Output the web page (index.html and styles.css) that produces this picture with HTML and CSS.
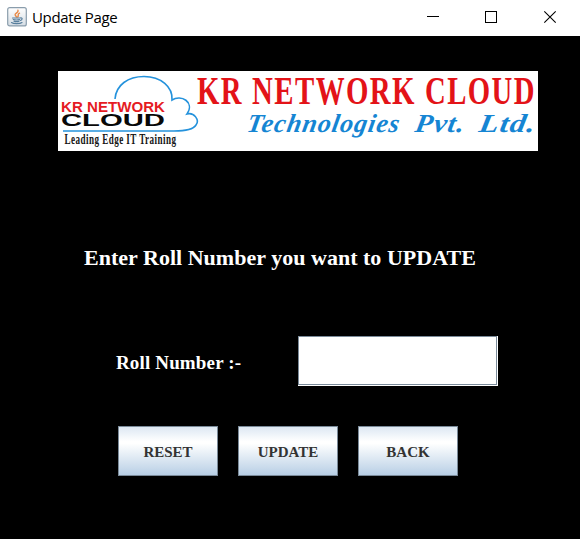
FILE: index.html
```html
<!DOCTYPE html>
<html lang="en">
<head>
<meta charset="utf-8">
<title>Update Page</title>
<link rel="stylesheet" href="styles.css">
</head>
<body>
<header class="titlebar">
  <svg class="app-icon" width="20" height="20" viewBox="0 0 20 20">
    <defs><linearGradient id="tile" x2="0" y2="1"><stop stop-color="#fff"/><stop offset="1" stop-color="#d5dde4"/></linearGradient></defs>
    <rect x=".7" y=".7" width="18.600" height="18.200" rx="2" fill="url(#tile)" stroke="#8a9dac" stroke-width="1.200"/>
    <g fill="none" stroke-linecap="round">
      <path d="M11 3.200C12 6 7 6.300 8.200 8.200L9.500 10M12.500 6.200C9.500 7.500 12.500 8 10.700 10" stroke="#e88743" stroke-width="1.400"/>
      <path d="M5.500 11h7.500M6.300 12.500q3.200 1 6.200 0M7 14.200q2.700 1 5 0M13 11c3-.8 2.500 2 .3 2.500M4.500 15.600c2 1.500 8.500 1.400 10.500 0" stroke="#587f9d" stroke-width="1.200"/>
    </g>
  </svg>
  <h1 class="title">Update Page</h1>
  <svg class="controls" width="130" height="14" viewBox="0 0 130 14" fill="none" stroke="#000">
    <path d="M0 6.500h12"/>
    <rect x="58.500" y="1.500" width="11" height="11"/>
    <path d="M117.300 1.300l11.400 11.400M128.700 1.300l-11.400 11.400" stroke-width="1.100"/>
  </svg>
</header>
<main class="content">
  <svg class="banner" width="480" height="80" viewBox="0 0 480 80">
    <rect width="480" height="80" fill="#fff"/>
    <path class="cloud" d="M57 28C58 14 70 5.500 86 5.500C103 5.500 115 16 114 29C123 23 137 31 129 43C136 41 142 49 138 54C135 59 127 60 116 60H5"/>
    <text class="brand" x="3" y="40.500" textLength="104" lengthAdjust="spacingAndGlyphs">KR NETWORK</text>
    <text class="brand-cloud" x="3" y="54.500" textLength="104" lengthAdjust="spacingAndGlyphs">CLOUD</text>
    <text class="tagline" x="6.500" y="72.500" textLength="112" lengthAdjust="spacingAndGlyphs">Leading Edge IT Training</text>
    <text class="headline" x="139" y="33" textLength="46" lengthAdjust="spacingAndGlyphs">KR</text>
    <text class="headline" x="194" y="33" textLength="164" lengthAdjust="spacingAndGlyphs">NETWORK</text>
    <text class="headline" x="367" y="33" textLength="111" lengthAdjust="spacingAndGlyphs">CLOUD</text>
    <g class="script" transform="translate(0 60.500) skewX(-10)">
      <text x="188" y="0" textLength="153" lengthAdjust="spacingAndGlyphs">Technologies</text>
      <text x="356" y="0" textLength="50" lengthAdjust="spacingAndGlyphs">Pvt.</text>
      <text x="420" y="0" textLength="57" lengthAdjust="spacingAndGlyphs">Ltd.</text>
    </g>
  </svg>
  <h2 class="prompt">Enter Roll Number you want to UPDATE</h2>
  <div class="field">
    <label for="roll">Roll Number :-</label>
    <div class="input-frame"><input id="roll" type="text"></div>
  </div>
  <div class="actions">
    <button>RESET</button>
    <button>UPDATE</button>
    <button>BACK</button>
  </div>
</main>
</body>
</html>
```
FILE: styles.css
```css
* { box-sizing: border-box; }
body { margin: 0; height: 539px; overflow: hidden; background: #000; font-family: "Liberation Serif", serif; }
.titlebar { display: flex; align-items: center; height: 36px; padding: 0 23px 2px 7px; background: #fff; }
.app-icon { flex: none; }
.title { margin: 0 auto 0 5px; font: 400 15px/20px "Open Sans", "Noto Sans", sans-serif; letter-spacing: -.35px; color: #000; }
.controls { flex: none; }
.content { padding: 35px 42px 0 58px; }
.banner { display: block; }
.cloud { fill: none; stroke: #2492dc; stroke-width: 1.6; }
.brand { font: bold 15.500px "Liberation Sans", sans-serif; fill: #e51b23; }
.brand-cloud { font: bold 17px "Liberation Sans", sans-serif; fill: #080808; }
.tagline { font: bold 14px "Liberation Serif", serif; letter-spacing: .7px; fill: #151515; }
.headline { font: bold 40px "Liberation Serif", serif; letter-spacing: 2px; fill: #e31318; }
.script { font: italic bold 26px "Liberation Serif", serif; letter-spacing: 1px; fill: #1585d3; }
.prompt { margin: 94px 0 0 26px; height: 26px; font-size: 22px; line-height: 26px; letter-spacing: .02px; white-space: nowrap; color: #fff; }
.field { display: flex; align-items: center; justify-content: space-between; height: 50px; margin-top: 65px; padding: 0 40px 0 58px; color: #fff; font-size: 19px; font-weight: bold; }
.field label { margin-top: 4px; letter-spacing: .15px; }
.input-frame { width: 200px; height: 50px; padding: 0 1px 1px 0; background: #fff; }
.input-frame input { display: block; width: 199px; height: 49px; padding: 0 4px; border: 1px solid #7a8a99; border-radius: 0; background: #fff; outline: 0; font: 19px "Liberation Serif", serif; }
.actions { display: flex; gap: 20px; margin: 40px 0 0 60px; }
.actions button { width: 100px; height: 50px; padding: 3px 0 0; border: 1px solid #7a8a99; border-radius: 0; background: linear-gradient(#dde8f3, #fff 30%, #fff 34%, #b8cfe5); color: #333; font: bold 15px "Liberation Serif", serif; }
```
